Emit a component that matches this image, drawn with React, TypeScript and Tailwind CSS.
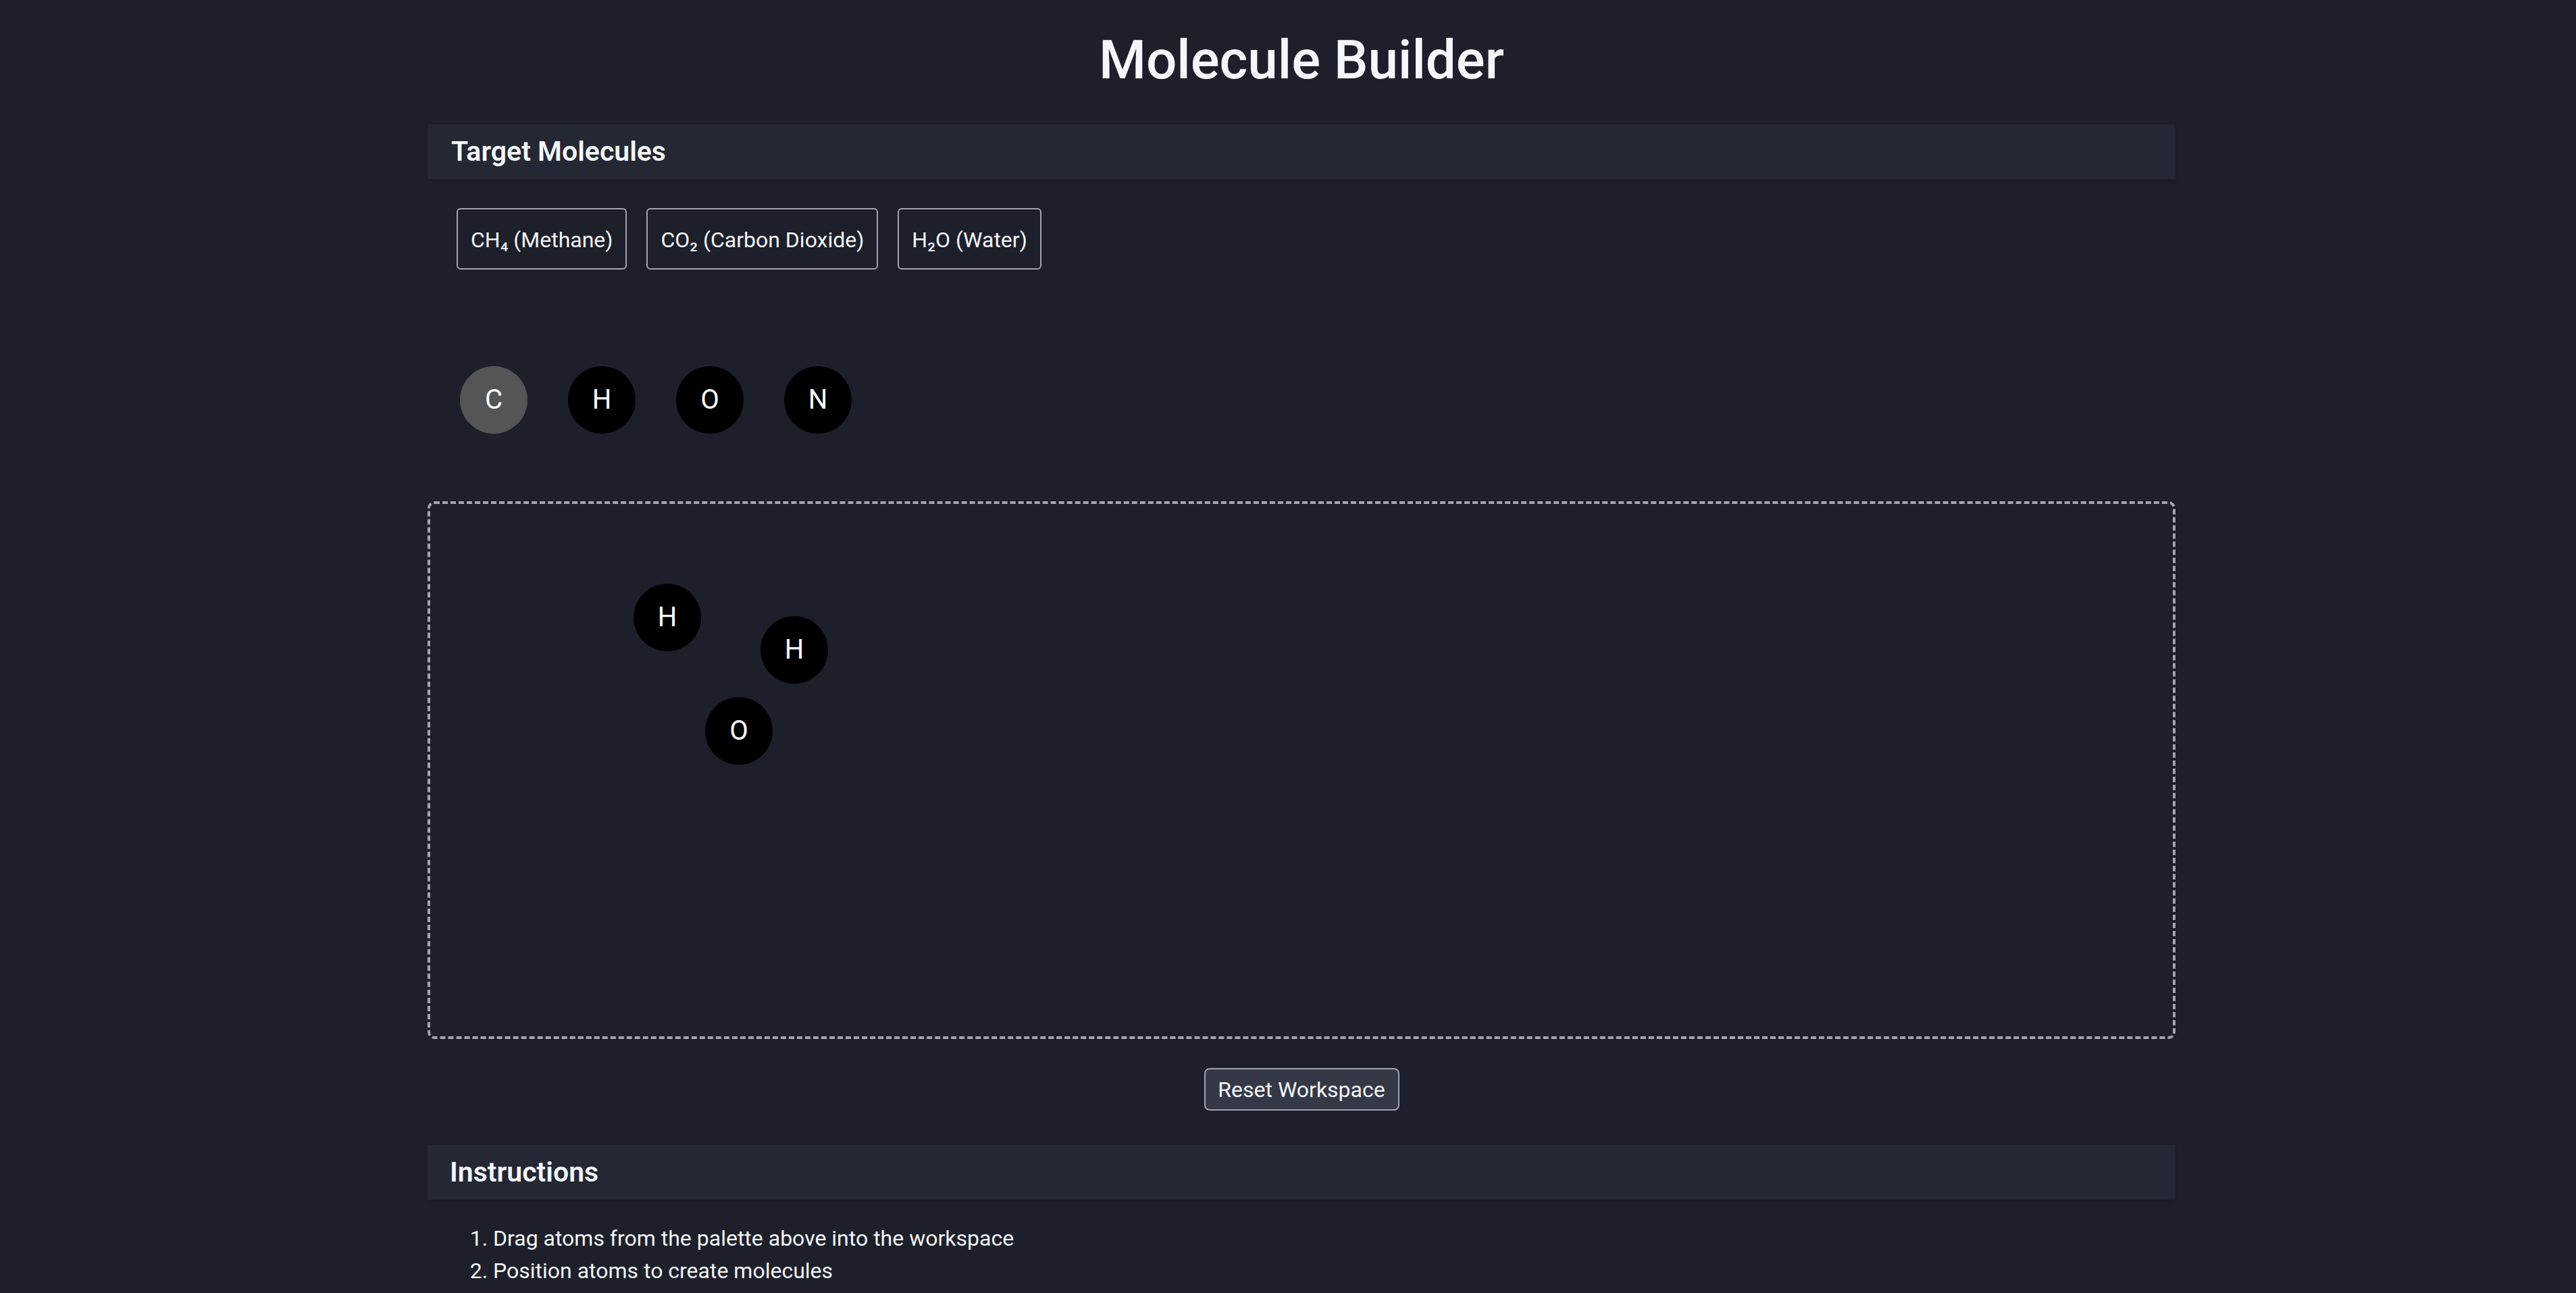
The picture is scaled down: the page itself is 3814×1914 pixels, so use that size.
import { useState } from "react"

interface PlacedAtom {
  id: number,
  symbol: string,
  x: number,
  y: number
}

const targets = ["CH₄ (Methane)", "CO₂ (Carbon Dioxide)", "H₂O (Water)"]

const palette = [
  { symbol: "C", color: "bg-[#555555]" },
  { symbol: "H", color: "bg-black" },
  { symbol: "O", color: "bg-black" },
  { symbol: "N", color: "bg-black" },
]

const startAtoms: PlacedAtom[] = [
  { id: 1, symbol: "H", x: 301, y: 118 },
  { id: 2, symbol: "H", x: 489, y: 166 },
  { id: 3, symbol: "O", x: 407, y: 286 },
]

const App = () => {
  const [atoms, setAtoms] = useState<PlacedAtom[]>(startAtoms)

  const resetWorkspace = () => {
    setAtoms([])
  }

  return (
    <div className="min-h-screen bg-[#1d202b] text-[#f4f6fb] font-['Roboto',sans-serif] pl-[40px] flex flex-col items-center">
      <h1 className="mt-[41px] text-[80px] leading-[96px] font-medium">Molecule Builder</h1>

      <div className="w-[2588px] mt-[47px]">
        <div className="h-[81px] bg-[#242734] shadow-md flex items-center pl-[35px]">
          <h2 className="text-[41px] font-semibold">Target Molecules</h2>
        </div>

        <div className="flex gap-[29px] pl-[43px] mt-[43px]">
          {targets.map((t) => (
            <button key={t} className="h-[91px] px-[19px] pt-[2px] text-[32px] border-2 border-[#9ea3b5] rounded-[6px]">
              {t}
            </button>
          ))}
        </div>

        <div className="flex gap-[60px] pl-[48px] mt-[143px]">
          {palette.map((a) => (
            <div key={a.symbol} className={`w-[100px] h-[100px] rounded-full ${a.color} flex items-center justify-center text-[40px] text-white cursor-grab`}>
              {a.symbol}
            </div>
          ))}
        </div>

        <div className="relative mt-[100px] h-[796px] border-4 border-dashed border-[#a0a4b4] rounded-[10px]">
          {atoms.map((a) => (
            <div
              key={a.id}
              className="absolute w-[100px] h-[100px] rounded-full bg-black flex items-center justify-center text-[40px] text-white"
              style={{ left: a.x, top: a.y }}
            >
              {a.symbol}
            </div>
          ))}
        </div>

        <div className="flex justify-center mt-[43px]">
          <button onClick={resetWorkspace} className="w-[289px] h-[63px] text-[32px] bg-[#343847] border-2 border-[#9ea3b5] rounded-[8px]">
            Reset Workspace
          </button>
        </div>

        <div className="h-[81px] bg-[#242734] shadow-md flex items-center pl-[33px] mt-[51px]">
          <h2 className="text-[41px] font-semibold">Instructions</h2>
        </div>

        <ol className="list-decimal pl-[97px] mt-[33px] text-[32px] leading-[48px]">
          <li>Drag atoms from the palette above into the workspace</li>
          <li>Position atoms to create molecules</li>
        </ol>
      </div>
    </div>
  )
}

export default App
